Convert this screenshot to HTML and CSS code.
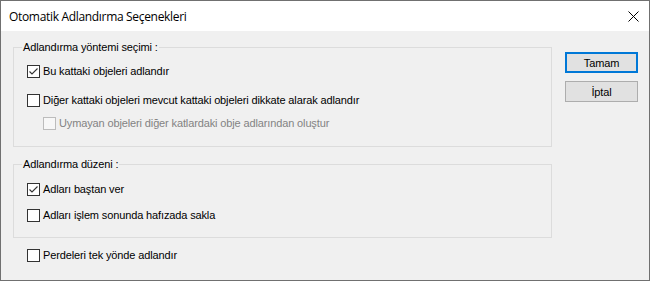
FILE: index.html
```html
<!DOCTYPE html>
<html lang="tr">
<head>
    <meta charset="UTF-8">
    <title>Otomatik Adlandırma Seçenekleri</title>
    <link rel="stylesheet" href="styles.css">
</head>
<body>

    <div class="dialog">
        <div class="titlebar">
            <span class="title">Otomatik Adlandırma Seçenekleri</span>
            <svg class="close" width="11" height="11" viewBox="0 0 11 11">
                <path d="M0.5 0.5 L10.5 10.5 M10.5 0.5 L0.5 10.5" stroke="#000" stroke-width="1" fill="none"/>
            </svg>
        </div>

        <div class="content">
            <div class="options">
                <fieldset class="group group-method">
                    <legend>Adlandırma yöntemi seçimi :</legend>
                    <div class="row row-first">
                        <span class="box checked"><svg width="11" height="11" viewBox="0 0 11 11"><path d="M1.5 5.5 L4 8 L9.5 2.5" stroke="#333" stroke-width="1.1" fill="none"/></svg></span>
                        <span>Bu kattaki objeleri adlandır</span>
                    </div>
                    <div class="row row-second">
                        <span class="box"></span>
                        <span>Diğer kattaki objeleri mevcut kattaki objeleri dikkate alarak adlandır</span>
                    </div>
                    <div class="row row-sub disabled">
                        <span class="box"></span>
                        <span>Uymayan objeleri diğer katlardaki obje adlarından oluştur</span>
                    </div>
                </fieldset>

                <fieldset class="group group-order">
                    <legend>Adlandırma düzeni :</legend>
                    <div class="row row-first">
                        <span class="box checked"><svg width="11" height="11" viewBox="0 0 11 11"><path d="M1.5 5.5 L4 8 L9.5 2.5" stroke="#333" stroke-width="1.1" fill="none"/></svg></span>
                        <span>Adları baştan ver</span>
                    </div>
                    <div class="row row-next">
                        <span class="box"></span>
                        <span>Adları işlem sonunda hafızada sakla</span>
                    </div>
                </fieldset>

                <div class="row row-walls">
                    <span class="box"></span>
                    <span>Perdeleri tek yönde adlandır</span>
                </div>
            </div>

            <div class="actions">
                <button class="btn default">Tamam</button>
                <button class="btn">İptal</button>
            </div>
        </div>
    </div>

</body>
</html>
```

FILE: styles.css
```css
* {
    box-sizing: border-box;
    margin: 0;
    padding: 0;
}

body {
    background: #f0f0f0;
    font-family: "Liberation Sans", Arial, sans-serif;
    font-size: 11px;
    letter-spacing: -0.13px;
    color: #000;
}

.dialog {
    width: 650px;
    height: 281px;
    border: 1px solid #707070;
    background: #f0f0f0;
    display: flex;
    flex-direction: column;
}

.titlebar {
    height: 30px;
    background: #fff;
    display: flex;
    align-items: center;
    justify-content: space-between;
    padding: 0 10px 0 8px;
}

.title {
    font-family: "Open Sans", "Noto Sans", sans-serif;
    font-size: 12px;
    letter-spacing: -0.32px;
}

.close {
    display: block;
}

.content {
    display: flex;
    padding: 10px 11px 0 12px;
}

.options {
    width: 539px;
}

.group {
    border: 1px solid #dcdcdc;
    padding: 0 0 0 13px;
}

.group legend {
    margin-left: -5px;
    padding: 0 1px;
    line-height: 13px;
}

.group-method {
    height: 106px;
}

.group-order {
    height: 80px;
    margin-top: 11px;
}

.row {
    display: flex;
    align-items: center;
    height: 16px;
    gap: 3px;
    white-space: nowrap;
}

.group-method .row-first {
    margin-top: 9px;
}

.row-second {
    margin-top: 13px;
}

.row-sub {
    margin-top: 7px;
    padding-left: 16px;
}

.group-order .row-first {
    margin-top: 10px;
}

.row-next {
    margin-top: 10px;
}

.row-walls {
    margin-top: 9px;
    padding-left: 14px;
}

.box {
    width: 13px;
    height: 13px;
    border: 1px solid #333;
    background: #fff;
    display: flex;
    align-items: center;
    justify-content: center;
    flex: none;
}

.disabled {
    color: #838383;
}

.disabled .box {
    border-color: #bcbcbc;
    background: #f7f7f7;
}

.actions {
    margin-left: 13px;
    padding-top: 11px;
    display: flex;
    flex-direction: column;
    gap: 8px;
}

.btn {
    width: 73px;
    height: 21px;
    background: #e1e1e1;
    border: 1px solid #adadad;
    font-family: "Liberation Sans", Arial, sans-serif;
    font-size: 11px;
    letter-spacing: -0.13px;
    color: #000;
}

.btn.default {
    border: 2px solid #0078d7;
}
```
